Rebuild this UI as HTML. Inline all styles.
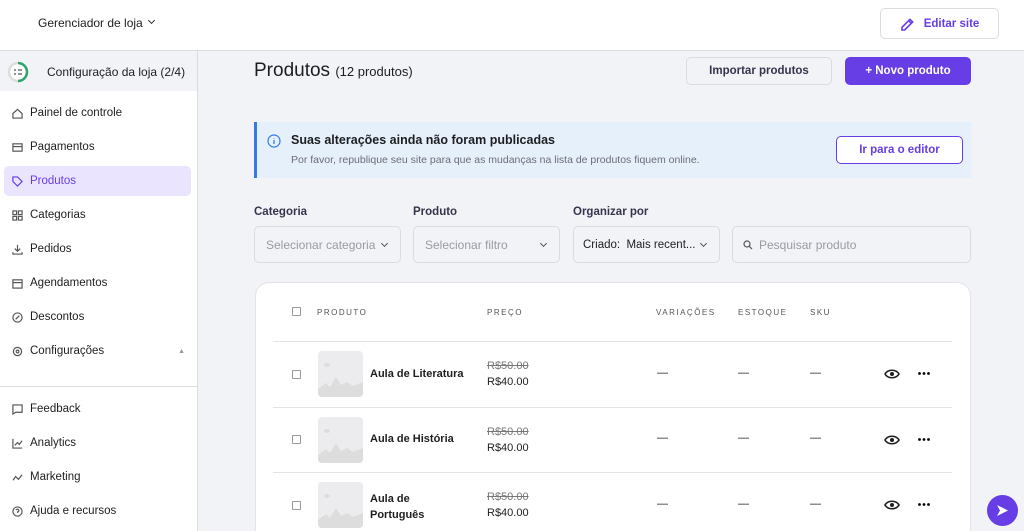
<!DOCTYPE html>
<html><head><meta charset="utf-8"><style>
*{box-sizing:border-box;margin:0;padding:0}
html,body{width:1024px;height:531px;overflow:hidden}
body{background:#f2f3f6;font-family:"Liberation Sans",sans-serif;color:#1d1e20;position:relative}
.top{position:absolute;left:0;top:0;width:1024px;height:51px;background:#fff;border-bottom:1px solid #dadce0}
.side{position:absolute;left:0;top:51px;width:198px;height:480px;background:#fff;border-right:1px solid #dadce0}
.abs{position:absolute}
.nav{position:absolute;left:4px;width:187px;height:30px;display:flex;align-items:center;font-size:11.5px;padding-left:8px;color:#1d1e20}
.nav svg{width:11px;height:11px;margin-right:7px;stroke:#555;fill:none;stroke-width:1.3}
.btn{position:absolute;border-radius:5px;font-size:11.5px;font-weight:bold;display:flex;align-items:center;justify-content:center}
.lbl{position:absolute;font-size:11.5px;font-weight:bold;color:#36344d;top:206px}
.inp{position:absolute;top:226px;height:37px;border:1px solid #dadce0;border-radius:5px;font-size:12px;color:#9a9aa5;display:flex;align-items:center;padding-left:11px;background:#f2f3f6}
.chev{position:absolute;right:13px;top:14px;width:5px;height:5px;border-right:1.3px solid #555;border-bottom:1.3px solid #555;transform:rotate(45deg)}
.th{position:absolute;top:308px;font-size:8px;letter-spacing:1.5px;color:#555}
.cb{position:absolute;left:292px;width:9px;height:9px;border:1px solid #999;border-radius:1px}
.img{position:absolute;left:318px;width:45px;height:46px;background:#ececee;border-radius:4px;overflow:hidden}
.row{position:absolute;left:273px;width:679px;height:1px;background:#e3e3e6}
.nm{position:absolute;left:370px;font-size:11px;font-weight:bold}
.old{position:absolute;left:487px;font-size:11px;color:#777;text-decoration:line-through}
.new{position:absolute;left:487px;font-size:11px}
.dash{position:absolute;font-size:11px}
.dots{position:absolute;left:918px;width:12px;height:3px}
</style></head><body>
<div class="top">
<div class="abs" style="left:38px;top:16px;font-size:12px">Gerenciador de loja</div>
<div class="abs" style="left:149px;top:18px;width:5px;height:5px;border-right:1.3px solid #333;border-bottom:1.3px solid #333;transform:rotate(45deg)"></div>
<div class="btn" style="left:880px;top:8px;width:119px;height:31px;border:1px solid #dadce0;color:#673de6;background:#fff"><svg width="16" height="16" viewBox="0 0 24 24" style="margin-right:8px"><path d="M3 21v-4L15 5l4 4L7 21z M13 7l4 4" fill="none" stroke="#673de6" stroke-width="2.4"/></svg>Editar site</div>
</div>
<div class="side">
<div class="abs" style="left:0;top:0;width:197px;height:40px;background:#f2f3f6"></div>
<svg class="abs" style="left:7px;top:10px" width="22" height="22" viewBox="0 0 22 22"><circle cx="11" cy="11" r="9" fill="#fff" stroke="#ddd" stroke-width="2.5"/><path d="M11 2a9 9 0 0 1 0 18" fill="none" stroke="#2fa56e" stroke-width="2.5"/><path d="M7 9h2M11 9h4M7 13h2M11 13h4" stroke="#555" stroke-width="1.2"/></svg>
<div class="abs" style="left:47px;top:14px;font-size:12px">Configuração da loja (2/4)</div>
<div class="nav" style="top:47px"><svg viewBox="0 0 12 12"><path d="M1 6L6 1.5 11 6V11H1z"/></svg>Painel de controle</div>
<div class="nav" style="top:81px"><svg viewBox="0 0 12 12"><rect x="1" y="2" width="10" height="8"/><path d="M1 5h10"/></svg>Pagamentos</div>
<div class="nav" style="top:115px;background:#ebe4ff;border-radius:5px;color:#673de6"><svg viewBox="0 0 12 12" style="stroke:#673de6"><path d="M1 1h5l5 5-5 5-5-5z"/></svg>Produtos</div>
<div class="nav" style="top:149px"><svg viewBox="0 0 12 12"><rect x="1" y="1" width="4" height="4"/><rect x="7" y="1" width="4" height="4"/><rect x="1" y="7" width="4" height="4"/><rect x="7" y="7" width="4" height="4"/></svg>Categorias</div>
<div class="nav" style="top:183px"><svg viewBox="0 0 12 12"><path d="M6 1v7M3 5l3 3 3-3M1 9v2h10V9"/></svg>Pedidos</div>
<div class="nav" style="top:217px"><svg viewBox="0 0 12 12"><rect x="1" y="2" width="10" height="9"/><path d="M1 5h10"/></svg>Agendamentos</div>
<div class="nav" style="top:251px"><svg viewBox="0 0 12 12"><circle cx="6" cy="6" r="5"/><path d="M4 8l4-4"/></svg>Descontos</div>
<div class="nav" style="top:285px"><svg viewBox="0 0 12 12"><circle cx="6" cy="6" r="4.5"/><circle cx="6" cy="6" r="1.5"/></svg>Configurações<span style="position:absolute;right:6px;font-size:7px;color:#999">▲</span></div>
<div class="abs" style="left:0;top:335px;width:197px;height:1px;background:#dadce0"></div>
<div class="nav" style="top:343px"><svg viewBox="0 0 12 12"><path d="M1 1h10v8H4l-3 2z"/></svg>Feedback</div>
<div class="nav" style="top:377px"><svg viewBox="0 0 12 12"><path d="M1 1v10h10M3 8l3-3 2 2 3-4"/></svg>Analytics</div>
<div class="nav" style="top:411px"><svg viewBox="0 0 12 12"><path d="M1 9l3-4 3 3 4-5"/></svg>Marketing</div>
<div class="nav" style="top:445px"><svg viewBox="0 0 12 12"><circle cx="6" cy="6" r="5"/><path d="M4.5 4.5a1.5 1.5 0 1 1 1.5 2V7.5"/></svg>Ajuda e recursos</div>
</div>
<div class="abs" style="left:254px;top:60px;font-size:19px">Produtos <span style="font-size:13px">(12 produtos)</span></div>
<div class="btn" style="left:686px;top:57px;width:146px;height:28px;border:1px solid #dadce0;color:#36344d;background:#f2f3f6">Importar produtos</div>
<div class="btn" style="left:845px;top:57px;width:126px;height:28px;background:#673de6;color:#fff">+ Novo produto</div>
<div class="abs" style="left:254px;top:122px;width:717px;height:56px;background:#e5f0fb;border-left:3px solid #357ae8"></div>
<svg class="abs" style="left:267px;top:134px" width="14" height="14" viewBox="0 0 14 14"><circle cx="7" cy="7" r="6" fill="none" stroke="#357ae8" stroke-width="1.2"/><path d="M7 6v4M7 4v.5" stroke="#357ae8" stroke-width="1.3"/></svg>
<div class="abs" style="left:291px;top:133px;font-size:12.5px;font-weight:bold">Suas alterações ainda não foram publicadas</div>
<div class="abs" style="left:291px;top:154px;font-size:10.5px;color:#6d6d78">Por favor, republique seu site para que as mudanças na lista de produtos fiquem online.</div>
<div class="btn" style="left:836px;top:136px;width:127px;height:28px;border:1px solid #673de6;color:#673de6;background:#fff">Ir para o editor</div>
<div class="lbl" style="left:254px">Categoria</div>
<div class="lbl" style="left:413px">Produto</div>
<div class="lbl" style="left:573px">Organizar por</div>
<div class="inp" style="left:254px;width:147px">Selecionar categoria<div class="chev"></div></div>
<div class="inp" style="left:413px;width:147px">Selecionar filtro<div class="chev"></div></div>
<div class="inp" style="left:573px;width:147px;color:#1d1e20;padding-left:9px;font-size:11.5px">Criado:&nbsp; Mais recent...<div class="chev"></div></div>
<div class="inp" style="left:732px;width:239px;padding-left:26px">Pesquisar produto<svg class="abs" style="left:10px;top:13px" width="10" height="10" viewBox="0 0 10 10"><circle cx="4" cy="4" r="3" fill="none" stroke="#555" stroke-width="1.2"/><path d="M6.3 6.3L9 9" stroke="#555" stroke-width="1.2"/></svg></div>
<div class="abs" style="left:255px;top:282px;width:716px;height:270px;background:#fff;border:1px solid #e3e3e6;border-radius:14px"></div>
<div class="cb" style="top:307px"></div>
<div class="th" style="left:317px">PRODUTO</div><div class="th" style="left:487px">PREÇO</div><div class="th" style="left:656px">VARIAÇÕES</div><div class="th" style="left:738px">ESTOQUE</div><div class="th" style="left:810px">SKU</div>
<div class="row" style="top:341px"></div>
<div class="row" style="top:407px"></div>
<div class="row" style="top:472px"></div>

<div class="cb" style="top:370px"></div><div class="img" style="top:351px"><svg width="45" height="46" viewBox="0 0 45 46"><ellipse cx="9" cy="14" rx="3" ry="2" fill="#ddd"/><path d="M0 38l8-6 4 4 6-10 5 8 6-3 6 4 10-4v21H0z" fill="#ddd"/></svg></div>
<div class="nm" style="top:368px">Aula de Literatura</div><div class="old" style="top:360px">R$50.00</div><div class="new" style="top:376px">R$40.00</div>
<div class="cb" style="top:435px"></div><div class="img" style="top:417px"><svg width="45" height="46" viewBox="0 0 45 46"><ellipse cx="9" cy="14" rx="3" ry="2" fill="#ddd"/><path d="M0 38l8-6 4 4 6-10 5 8 6-3 6 4 10-4v21H0z" fill="#ddd"/></svg></div>
<div class="nm" style="top:433px">Aula de História</div><div class="old" style="top:426px">R$50.00</div><div class="new" style="top:442px">R$40.00</div>
<div class="cb" style="top:501px"></div><div class="img" style="top:482px"><svg width="45" height="46" viewBox="0 0 45 46"><ellipse cx="9" cy="14" rx="3" ry="2" fill="#ddd"/><path d="M0 38l8-6 4 4 6-10 5 8 6-3 6 4 10-4v21H0z" fill="#ddd"/></svg></div>
<div class="nm" style="top:491px;line-height:16px">Aula de<br>Português</div><div class="old" style="top:491px">R$50.00</div><div class="new" style="top:507px">R$40.00</div>

<div class="dash" style="left:657px;top:367px">—</div><div class="dash" style="left:738px;top:367px">—</div><div class="dash" style="left:810px;top:367px">—</div>
<div class="dash" style="left:657px;top:432px">—</div><div class="dash" style="left:738px;top:432px">—</div><div class="dash" style="left:810px;top:432px">—</div>
<div class="dash" style="left:657px;top:498px">—</div><div class="dash" style="left:738px;top:498px">—</div><div class="dash" style="left:810px;top:498px">—</div>
<svg class="abs" style="left:884px;top:368px" width="16" height="12" viewBox="0 0 16 12"><path d="M1 6C4 1 12 1 15 6 12 11 4 11 1 6z" fill="none" stroke="#1d1e20" stroke-width="1.6"/><circle cx="8" cy="6" r="2" fill="#1d1e20"/></svg>
<svg class="abs" style="left:884px;top:434px" width="16" height="12" viewBox="0 0 16 12"><path d="M1 6C4 1 12 1 15 6 12 11 4 11 1 6z" fill="none" stroke="#1d1e20" stroke-width="1.6"/><circle cx="8" cy="6" r="2" fill="#1d1e20"/></svg>
<svg class="abs" style="left:884px;top:499px" width="16" height="12" viewBox="0 0 16 12"><path d="M1 6C4 1 12 1 15 6 12 11 4 11 1 6z" fill="none" stroke="#1d1e20" stroke-width="1.6"/><circle cx="8" cy="6" r="2" fill="#1d1e20"/></svg>
<svg class="dots" style="top:372px" viewBox="0 0 12 3"><circle cx="1.5" cy="1.5" r="1.4"/><circle cx="6" cy="1.5" r="1.4"/><circle cx="10.5" cy="1.5" r="1.4"/></svg>
<svg class="dots" style="top:438px" viewBox="0 0 12 3"><circle cx="1.5" cy="1.5" r="1.4"/><circle cx="6" cy="1.5" r="1.4"/><circle cx="10.5" cy="1.5" r="1.4"/></svg>
<svg class="dots" style="top:503px" viewBox="0 0 12 3"><circle cx="1.5" cy="1.5" r="1.4"/><circle cx="6" cy="1.5" r="1.4"/><circle cx="10.5" cy="1.5" r="1.4"/></svg>
<div class="abs" style="left:987px;top:495px;width:31px;height:31px;border-radius:50%;background:#673de6"><svg width="31" height="31" viewBox="0 0 31 31"><path d="M10 10l11 5.5-11 5.5 3-5.5z" fill="#fff"/></svg></div>
</body></html>
